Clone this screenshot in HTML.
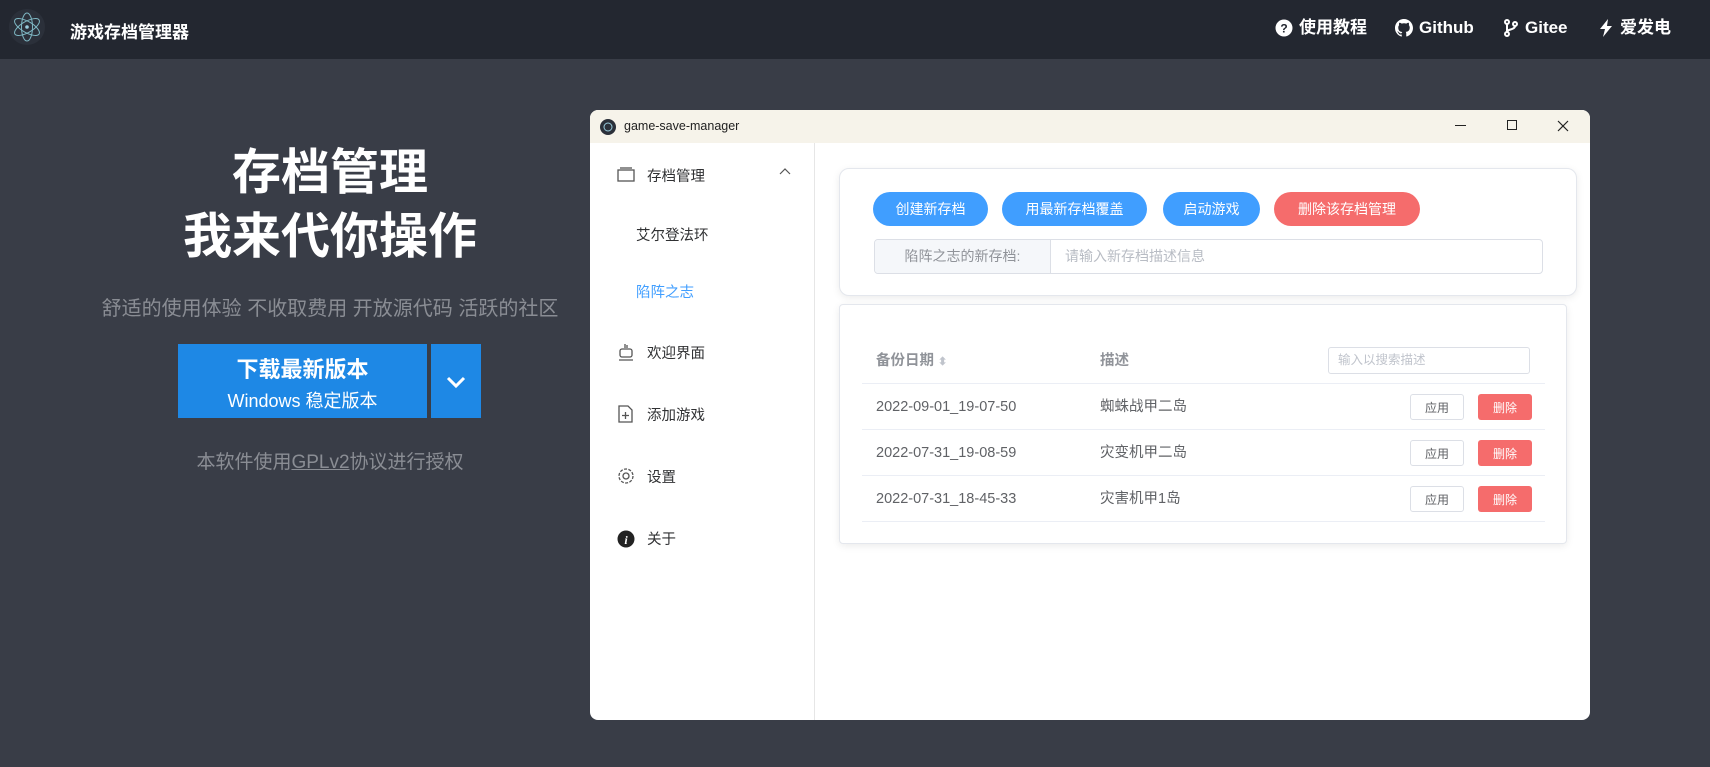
<!DOCTYPE html>
<html><head><meta charset="utf-8"><style>
*{margin:0;padding:0;box-sizing:border-box}
body{width:1710px;height:767px;background:#393d47;font-family:"Liberation Sans","Noto Sans CJK SC",sans-serif;position:relative;overflow:hidden}
.abs{position:absolute}
.top{left:0;top:0;width:1710px;height:59px;background:#232730}
.nav{color:#fff;font-weight:bold;font-size:17px;display:flex;align-items:center;gap:6px;top:16px;height:24px;line-height:24px}
.nav svg{display:block}
.win{left:590px;top:110px;width:1000px;height:610px;background:#fff;border-radius:8px;overflow:hidden}
.tb{left:0;top:0;width:1000px;height:33px;background:#f6f3ea}
.side{left:0;top:33px;width:225px;height:577px;border-right:1px solid #e6e6e6}
.si{font-size:14.5px;color:#303133;left:57px}
.card{background:#fff;border:1px solid #e4e7ed;border-radius:10px;box-shadow:0 2px 8px rgba(0,0,0,.08)}
.btn{top:82px;height:34px;border-radius:17px;color:#fff;font-size:14px;display:flex;align-items:center;justify-content:center;background:#409eff}
.cell{font-size:14.5px;color:#606266;height:46px;line-height:46px}
.sb{width:54px;height:26px;border-radius:3px;font-size:12px;display:flex;align-items:center;justify-content:center}
.line{left:22px;width:683px;height:1px;background:#ebeef5}
</style></head><body>
<div class="abs top"></div>
<svg class="abs" style="left:8px;top:8px" width="38" height="38" viewBox="0 0 38 38"><circle cx="19" cy="19" r="18" fill="#2b303a"/><g fill="none" stroke="#7fb8c4" stroke-width="1"><ellipse cx="19" cy="19" rx="14" ry="5.5" transform="rotate(30 19 19)"/><ellipse cx="19" cy="19" rx="14" ry="5.5" transform="rotate(-30 19 19)"/><ellipse cx="19" cy="19" rx="14" ry="5.5" transform="rotate(90 19 19)"/></g><circle cx="19" cy="19" r="1.8" fill="#9cd"/></svg>
<div class="abs" style="left:70px;top:18px;color:#fff;font-weight:bold;font-size:17px">游戏存档管理器</div>
<div class="abs nav" style="left:1275px"><svg width="18" height="18"><circle cx="9" cy="9" r="8.5" fill="#fff"/><text x="9" y="13.5" font-size="12" font-weight="bold" text-anchor="middle" fill="#232730">?</text></svg>使用教程</div>
<div class="abs nav" style="left:1395px"><svg width="18" height="18" viewBox="0 0 16 16"><path fill="#fff" d="M8 0C3.6 0 0 3.6 0 8c0 3.5 2.3 6.5 5.5 7.6.4.1.5-.2.5-.4v-1.4c-2.2.5-2.7-1-2.700-1-.4-.9-.9-1.2-.9-1.2-.7-.5.1-.5.1-.5.8.1 1.2.8 1.2.8.7 1.2 1.9.9 2.3.7.1-.5.3-.9.5-1.1-1.800-.2-3.600-.9-3.600-4 0-.9.3-1.6.8-2.1-.1-.2-.4-1 .1-2.1 0 0 .7-.2 2.200.8.6-.2 1.300-.3 2-.3s1.400.1 2 .3c1.500-1 2.200-.8 2.200-.8.4 1.1.2 1.9.1 2.1.5.6.8 1.3.8 2.1 0 3.1-1.900 3.7-3.600 3.9.3.3.5.8.5 1.5v2.2c0 .2.1.5.6.4C13.7 14.5 16 11.5 16 8c0-4.4-3.6-8-8-8z"/></svg>Github</div>
<div class="abs nav" style="left:1503px"><svg width="16" height="18" viewBox="0 0 16 18" fill="none" stroke="#fff" stroke-width="2"><circle cx="4" cy="3" r="2"/><circle cx="4" cy="15" r="2"/><circle cx="12" cy="5" r="2"/><path d="M4 5v8M12 7c0 4-8 3-8 6"/></svg>Gitee</div>
<div class="abs nav" style="left:1598px"><svg width="16" height="18" viewBox="0 0 16 18"><path fill="#fff" d="M10 0L2 10h5l-2 8 9-11H9z"/></svg>爱发电</div>

<div class="abs" style="left:0;width:660px;top:141px;text-align:center;color:#fff;font-weight:bold;font-size:49px;line-height:64px">存档管理<br>我来代你操作</div>
<div class="abs" style="left:0;width:660px;top:292px;text-align:center;color:#8a8d94;font-size:20px">舒适的使用体验 不收取费用 开放源代码 活跃的社区</div>
<div class="abs" style="left:178px;top:344px;width:249px;height:74px;background:#1e88e5;color:#fff;text-align:center"><div style="font-size:22px;font-weight:bold;margin-top:8px">下载最新版本</div><div style="font-size:18px;margin-top:3px">Windows 稳定版本</div></div>
<div class="abs" style="left:431px;top:344px;width:50px;height:74px;background:#1e88e5"><svg width="50" height="74"><path d="M17 34l8 8 8-8" fill="none" stroke="#fff" stroke-width="3"/></svg></div>
<div class="abs" style="left:0;width:660px;top:447px;text-align:center;color:#8a8d94;font-size:19px">本软件使用<u>GPLv2</u>协议进行授权</div>

<div class="abs win">
<div class="abs tb"></div>
<svg class="abs" style="left:10px;top:9px" width="16" height="16"><circle cx="8" cy="8" r="8" fill="#2b303a"/><circle cx="8" cy="8" r="4" fill="none" stroke="#9cd" stroke-width="1"/></svg>
<div class="abs" style="left:34px;top:9px;font-size:12.5px;color:#222">game-save-manager</div>
<div class="abs" style="left:865px;top:15px;width:11px;height:1px;background:#222"></div>
<div class="abs" style="left:917px;top:10px;width:10px;height:10px;border:1px solid #222"></div>
<svg class="abs" style="left:967px;top:10px" width="12" height="12"><path d="M1 1l10 10M11 1L1 11" stroke="#222" stroke-width="1.2"/></svg>
<div class="abs side">
<svg class="abs" style="left:27px;top:23px" width="18" height="16" fill="none" stroke="#555" stroke-width="1.3"><rect x="1" y="4" width="16" height="11"/><path d="M3 2h12"/></svg>
<div class="abs si" style="top:22px">存档管理</div>
<svg class="abs" style="left:189px;top:24px" width="12" height="10"><path d="M1 7l5-5 5 5" fill="none" stroke="#555" stroke-width="1.2"/></svg>
<div class="abs si" style="left:46px;top:81px">艾尔登法环</div>
<div class="abs si" style="left:46px;top:138px;color:#409eff">陷阵之志</div>
<svg class="abs" style="left:28px;top:200px" width="16" height="18" fill="none" stroke="#555" stroke-width="1.3"><rect x="2" y="6" width="12" height="8" rx="2"/><path d="M1 17h14M7 1v4M9 2v3"/></svg>
<div class="abs si" style="top:199px">欢迎界面</div>
<svg class="abs" style="left:28px;top:262px" width="15" height="18" fill="none" stroke="#555" stroke-width="1.3"><path d="M1 1h9l4 4v12H1z M7.5 7v7M4 10.5h7"/></svg>
<div class="abs si" style="top:261px">添加游戏</div>
<svg class="abs" style="left:27px;top:324px" width="18" height="18" viewBox="0 0 18 18" fill="none" stroke="#555" stroke-width="1.3"><circle cx="9" cy="9" r="3"/><circle cx="9" cy="9" r="7" stroke-dasharray="3 1.4"/></svg>
<div class="abs si" style="top:323px">设置</div>
<svg class="abs" style="left:27px;top:387px" width="18" height="18"><circle cx="9" cy="9" r="8.5" fill="#222"/><text x="9" y="14" font-size="12" font-style="italic" font-weight="bold" text-anchor="middle" fill="#fff" font-family="Liberation Serif">i</text></svg>
<div class="abs si" style="top:385px">关于</div>
</div>
<div class="abs card" style="left:249px;top:58px;width:738px;height:128px">
<div class="abs btn" style="left:33px;top:23px;width:115px">创建新存档</div>
<div class="abs btn" style="left:162px;top:23px;width:145px">用最新存档覆盖</div>
<div class="abs btn" style="left:323px;top:23px;width:97px">启动游戏</div>
<div class="abs btn" style="left:434px;top:23px;width:146px;background:#f56c6c">删除该存档管理</div>
<div class="abs" style="left:34px;top:70px;width:669px;height:35px;border:1px solid #dcdfe6;border-radius:4px;overflow:hidden"><div style="position:absolute;left:0;top:0;width:176px;height:33px;background:#f5f7fa;border-right:1px solid #dcdfe6;color:#909399;font-size:14px;line-height:33px;text-align:center">陷阵之志的新存档:</div><div style="position:absolute;left:190px;top:0;line-height:33px;font-size:14px;color:#b8bcc4">请输入新存档描述信息</div></div>
</div>
<div class="abs card" style="left:249px;top:194px;width:728px;height:240px;border-radius:4px">
<div class="abs cell" style="left:36px;top:33px;font-weight:bold;color:#909399">备份日期 <span style="color:#c0c4cc;font-size:11px">⬍</span></div>
<div class="abs cell" style="left:260px;top:33px;font-weight:bold;color:#909399">描述</div>
<div class="abs" style="left:488px;top:42px;width:202px;height:27px;border:1px solid #dcdfe6;border-radius:3px;font-size:12.5px;color:#c0c4cc;line-height:25px;padding-left:9px">输入以搜索描述</div>
<div class="abs line" style="top:78px"></div>
<div class="abs line" style="top:124px"></div>
<div class="abs line" style="top:170px"></div>
<div class="abs line" style="top:216px"></div>
<div class="abs cell" style="left:36px;top:79px">2022-09-01_19-07-50</div><div class="abs cell" style="left:260px;top:79px">蜘蛛战甲二岛</div>
<div class="abs cell" style="left:36px;top:125px">2022-07-31_19-08-59</div><div class="abs cell" style="left:260px;top:125px">灾变机甲二岛</div>
<div class="abs cell" style="left:36px;top:171px">2022-07-31_18-45-33</div><div class="abs cell" style="left:260px;top:171px">灾害机甲1岛</div>
<div class="abs sb" style="left:570px;top:89px;border:1px solid #dcdfe6;color:#606266;background:#fff">应用</div><div class="abs sb" style="left:638px;top:89px;background:#f56c6c;color:#fff">删除</div>
<div class="abs sb" style="left:570px;top:135px;border:1px solid #dcdfe6;color:#606266">应用</div><div class="abs sb" style="left:638px;top:135px;background:#f56c6c;color:#fff">删除</div>
<div class="abs sb" style="left:570px;top:181px;border:1px solid #dcdfe6;color:#606266">应用</div><div class="abs sb" style="left:638px;top:181px;background:#f56c6c;color:#fff">删除</div>
</div>
</div>
</body></html>
